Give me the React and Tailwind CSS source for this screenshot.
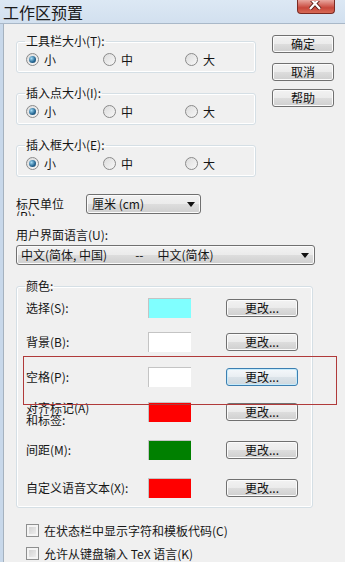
import React from 'react';

const btn =
  'flex items-center justify-center rounded-[3px] border border-[#707070] bg-[linear-gradient(#f2f2f2,#ebebeb_50%,#dddddd_51%,#cfcfcf)] shadow-[inset_0_0_0_1px_#fbfbfb] text-[12px] leading-[12px] text-[#111]';

function Radio({ checked, label }) {
  return (
    <div className="flex items-center gap-[5px]">
      <div className="flex h-[13px] w-[13px] items-center justify-center rounded-full border border-[#8a8a8a] bg-[linear-gradient(135deg,#dcdcdc,#f7f7f7)]">
        {checked && (
          <div className="h-[7px] w-[7px] rounded-full bg-[radial-gradient(circle_at_35%_35%,#a5dcf5,#2a6c98_55%,#0d3453)]" />
        )}
      </div>
      <span>{label}</span>
    </div>
  );
}

function SizeGroup({ title }) {
  return (
    <fieldset className="rounded-[3px] border border-[#d5dfe5] pl-[9px] pt-[6px] pb-[6px] shadow-[inset_0_0_0_1px_#ffffff]">
      <legend className="ml-[-1px] px-[1px] leading-[12px]">{title}</legend>
      <div className="flex h-[13px] items-center">
        <div className="w-[77px]">
          <Radio checked label="小" />
        </div>
        <div className="w-[82px]">
          <Radio label="中" />
        </div>
        <Radio label="大" />
      </div>
    </fieldset>
  );
}

function Arrow() {
  return (
    <svg width="8" height="5" viewBox="0 0 8 5">
      <polygon points="0,0 8,0 4,5" fill="#111" />
    </svg>
  );
}

function ColorRow({ label, color, mt, focused, tall }) {
  return (
    <div className={`flex ${tall ? 'items-start' : 'items-center'} ${mt}`}>
      <div className="w-[122px] leading-[12px]">{label}</div>
      <div
        className="h-[20px] w-[43px] border-t border-l border-[#c4c4c4]"
        style={{ backgroundColor: color }}
      />
      <button
        className={
          focused
            ? 'ml-[35px] flex h-[18px] w-[72px] items-center justify-center rounded-[3px] border border-[#3c7fb1] bg-[linear-gradient(#f4f8fb,#e9eef2_50%,#dbe3e9_51%,#cfd8de)] shadow-[inset_0_0_0_1px_#c6ebfb] text-[12px] leading-[12px] text-[#111]'
            : `ml-[35px] h-[18px] w-[72px] ${tall ? 'mt-[1px]' : ''} ${btn}`
        }
      >
        更改...
      </button>
    </div>
  );
}

function Check({ label, mt }) {
  return (
    <div className={`flex items-center gap-[5px] ${mt}`}>
      <div className="h-[13px] w-[13px] border border-[#8e8f8f] bg-[linear-gradient(135deg,#cbcbcb,#f4f4f4)] shadow-[inset_0_0_0_2px_#f4f4f4]" />
      <span className="leading-[12px]">{label}</span>
    </div>
  );
}

export default function App() {
  return (
    <div
      className="relative h-[562px] w-[345px] overflow-hidden bg-[#f0f0f0] text-[12px] text-[#161616]"
      style={{ fontFamily: '"Noto Sans CJK SC", "Noto Sans", sans-serif' }}
    >
      {/* title bar */}
      <div className="flex h-[24px] items-start bg-[linear-gradient(#dce8f4,#d2e0ef)] border-b border-[#a9b8c8]">
        <div className="ml-[3px] mt-[2px] text-[16px] leading-[20px] text-[#1a1a1a]">工作区预置</div>
        <div className="ml-auto mr-[10px] flex h-[14px] w-[38px] items-end justify-center rounded-b-[4px] border border-t-0 border-[#7a2a22] bg-[linear-gradient(#e9a79f,#c8473b_60%,#d76a55)]">
          <svg width="14" height="9" viewBox="0 0 14 9" className="mb-[3px]">
            <path d="M1 -3 L11 8 M11 -3 L1 8" stroke="#5a1d16" strokeWidth="4" />
            <path d="M1 -3 L11 8 M11 -3 L1 8" stroke="#fff" strokeWidth="2.2" />
          </svg>
        </div>
      </div>

      {/* body */}
      <div className="h-[538px] border-l-[3px] border-[#c8d8ea]">
        <div className="h-full border-l border-[#a5b2bf] pl-[12px] pt-[11px]">
          <div className="flex">
            <div className="flex w-[240px] flex-col gap-[14px]">
              <SizeGroup title="工具栏大小(T):" />
              <SizeGroup title="插入点大小(I):" />
              <SizeGroup title="插入框大小(E):" />
            </div>
            <div className="ml-[16px] flex flex-col">
              <button className={`h-[18px] w-[62px] ${btn}`}>确定</button>
              <button className={`mt-[10px] h-[18px] w-[62px] ${btn}`}>取消</button>
              <button className={`mt-[8px] h-[18px] w-[62px] ${btn}`}>帮助</button>
            </div>
          </div>

          {/* ruler unit */}
          <div className="mt-[17px] flex h-[20px] items-start">
            <div className="h-[22px] w-[70px] overflow-hidden pt-[4px] leading-[12px]">
              <div>标尺单位</div>
              <div>(R):</div>
            </div>
            <div className="flex h-[20px] w-[115px] items-center justify-between rounded-[3px] border border-[#707070] bg-[linear-gradient(#f2f2f2,#ebebeb_50%,#dddddd_51%,#cfcfcf)] pl-[5px] pr-[5px] shadow-[inset_0_0_0_1px_#fbfbfb]">
              <span className="leading-[12px]">厘米 (cm)</span>
              <Arrow />
            </div>
          </div>

          {/* language */}
          <div className="mt-[15px] leading-[12px]">用户界面语言(U):</div>
          <div className="mt-[4px] flex h-[20px] w-[299px] items-center justify-between rounded-[3px] border border-[#707070] bg-[linear-gradient(#f2f2f2,#ebebeb_50%,#dddddd_51%,#cfcfcf)] pl-[4px] pr-[5px] shadow-[inset_0_0_0_1px_#fbfbfb]">
            <span className="flex leading-[12px]">
              <span>中文(简体, 中国)</span>
              <span className="ml-[28px]">--</span>
              <span className="ml-[14px]">中文(简体)</span>
            </span>
            <Arrow />
          </div>

          {/* colours */}
          <fieldset className="mt-[15px] w-[297px] rounded-[3px] border border-[#d5dfe5] pl-[9px] pb-[9px] shadow-[inset_0_0_0_1px_#ffffff]">
            <legend className="ml-[-1px] px-[1px] leading-[12px]">颜色:</legend>
            <ColorRow label="选择(S):" color="#80ffff" mt="mt-[6px]" />
            <ColorRow label="背景(B):" color="#ffffff" mt="mt-[14px]" />
            <ColorRow label="空格(P):" color="#ffffff" mt="mt-[15px]" focused />
            <ColorRow
              label={
                <>
                  <div>对齐标记(A)</div>
                  <div>和标签:</div>
                </>
              }
              color="#ff0000"
              mt="mt-[15px]"
              tall
            />
            <ColorRow label="间距(M):" color="#008000" mt="mt-[14px]" />
            <ColorRow label="自定义语音文本(X):" color="#ff0000" mt="mt-[18px]" />
          </fieldset>

          <div className="pl-[10px]">
            <Check label="在状态栏中显示字符和模板代码(C)" mt="mt-[16px]" />
            <Check label="允许从键盘输入 TeX 语言(K)" mt="mt-[10px]" />
          </div>
        </div>
      </div>

      {/* red annotation box */}
      <div className="pointer-events-none absolute left-[23px] top-[356px] h-[49px] w-[314px] border border-[#b03a3a]" />
    </div>
  );
}
